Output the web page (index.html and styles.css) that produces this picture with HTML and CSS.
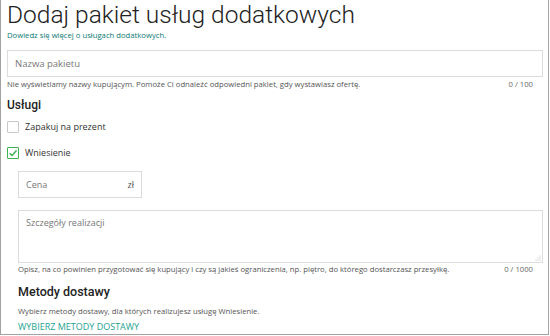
FILE: index.html
```html
<!DOCTYPE html>
<html lang="pl">
<head>
    <meta charset="UTF-8">
    <title>Dodaj pakiet usług dodatkowych</title>
    <link rel="stylesheet" href="styles.css">
</head>
<body>

    <div class="panel">

        <!-- Header -->
        <h1 class="title">Dodaj pakiet usług dodatkowych</h1>
        <a class="info-link" href="#">Dowiedz się więcej o usługach dodatkowych.</a>

        <!-- Package name -->
        <div class="field name-field">
            <input class="text-input" type="text" placeholder="Nazwa pakietu">
        </div>
        <div class="hint-row">
            <span>Nie wyświetlamy nazwy kupującym. Pomoże Ci odnaleźć odpowiedni pakiet, gdy wystawiasz ofertę.</span>
            <span class="counter">0 / 100</span>
        </div>

        <!-- Services -->
        <h2 class="section-title">Usługi</h2>

        <label class="check-row">
            <span class="check-box"></span>
            <span>Zapakuj na prezent</span>
        </label>

        <label class="check-row">
            <span class="check-box checked">
                <svg viewBox="0 0 12 12" width="10" height="10">
                    <path d="M2 6.2 L4.8 9 L10.2 3" fill="none" stroke="#3fb250" stroke-width="1.8"/>
                </svg>
            </span>
            <span>Wniesienie</span>
        </label>

        <div class="sub-options">
            <div class="price-input">
                <span class="placeholder">Cena</span>
                <span class="unit">zł</span>
            </div>

            <div class="textarea-box">
                <span class="placeholder">Szczegóły realizacji</span>
                <svg class="grip" viewBox="0 0 6 6" width="6" height="6">
                    <circle cx="5" cy="1" r="0.5" fill="#aaa"/>
                    <circle cx="3" cy="3" r="0.5" fill="#aaa"/>
                    <circle cx="5" cy="3" r="0.5" fill="#aaa"/>
                    <circle cx="1" cy="5" r="0.5" fill="#aaa"/>
                    <circle cx="3" cy="5" r="0.5" fill="#aaa"/>
                    <circle cx="5" cy="5" r="0.5" fill="#aaa"/>
                </svg>
            </div>
            <div class="hint-row">
                <span>Opisz, na co powinien przygotować się kupujący i czy są jakieś ograniczenia, np. piętro, do którego dostarczasz przesyłkę.</span>
                <span class="counter">0 / 1000</span>
            </div>

            <h2 class="section-title delivery-title">Metody dostawy</h2>
            <p class="hint">Wybierz metody dostawy, dla których realizujesz usługę Wniesienie.</p>
            <a class="action-link" href="#">WYBIERZ METODY DOSTAWY</a>
        </div>

    </div>

</body>
</html>
```

FILE: styles.css
```css
/* Reset */
* {
    box-sizing: border-box;
    margin: 0;
    padding: 0;
}

html, body {
    width: 100%;
    height: 100%;
    overflow: hidden;
    background-color: #fff;
    font-family: "Open Sans", sans-serif;
    color: #333;
}

/* Outer panel (top edge scrolled away) */
.panel {
    width: 549px;
    height: 335px;
    border: 1px solid #a3a3a3;
    border-top: none;
    padding: 0 5px 0 6px;
    display: flex;
    flex-direction: column;
}

/* Header */
.title {
    font-family: Roboto, sans-serif;
    font-weight: 300;
    font-size: 24.5px;
    line-height: 29px;
    color: #222;
}

.info-link {
    font-size: 7.7px;
    line-height: 12px;
    margin-top: 0;
    color: #0d7a74;
    text-decoration: none;
}

/* Inputs */
.text-input {
    width: 100%;
    height: 27px;
    border: 1px solid #dcdcdc;
    padding: 0 7px;
    font-family: "Open Sans", sans-serif;
    font-size: 9.5px;
    outline: none;
}

.text-input::placeholder {
    color: #777;
}

.name-field {
    margin-top: 9px;
}

.hint-row {
    display: flex;
    justify-content: space-between;
    font-size: 7.7px;
    line-height: 11px;
    margin-top: 2px;
    color: #555;
    padding-right: 10px;
}

.counter {
    color: #666;
}

/* Sections */
.section-title {
    font-family: Roboto, sans-serif;
    font-weight: 500;
    font-size: 12px;
    line-height: 14px;
    color: #222;
    margin-top: 8px;
}

/* Checkboxes */
.check-row {
    display: flex;
    align-items: center;
    gap: 6px;
    font-size: 9px;
    color: #333;
    margin-top: 8px;
}

.check-row + .check-row {
    margin-top: 13px;
}

.check-box {
    width: 12px;
    height: 12px;
    border: 1px solid #c8c8c8;
    border-radius: 1px;
    display: flex;
    align-items: center;
    justify-content: center;
}

.check-box.checked {
    border-color: #3fb250;
}

/* Wniesienie options */
.sub-options {
    padding-left: 11px;
    display: flex;
    flex-direction: column;
}

.price-input {
    margin-top: 12px;
    width: 124px;
    height: 27px;
    border: 1px solid #dcdcdc;
    display: flex;
    align-items: center;
    justify-content: space-between;
    padding: 0 7px;
    font-size: 9px;
}

.placeholder {
    color: #777;
}

.unit {
    color: #555;
}

.textarea-box {
    position: relative;
    margin-top: 12px;
    height: 53px;
    border: 1px solid #dcdcdc;
    padding: 5px 7px;
    font-size: 9px;
}

.grip {
    position: absolute;
    right: 1px;
    bottom: 1px;
}

.sub-options .hint-row {
    margin-top: 1px;
}

.delivery-title {
    font-size: 12.5px;
    line-height: 16px;
    margin-top: 9px;
}

.hint {
    font-size: 7.7px;
    line-height: 11px;
    color: #555;
    margin-top: 6px;
}

.action-link {
    font-size: 9px;
    line-height: 12px;
    margin-top: 4px;
    color: #1ea392;
    text-decoration: none;
}
```
